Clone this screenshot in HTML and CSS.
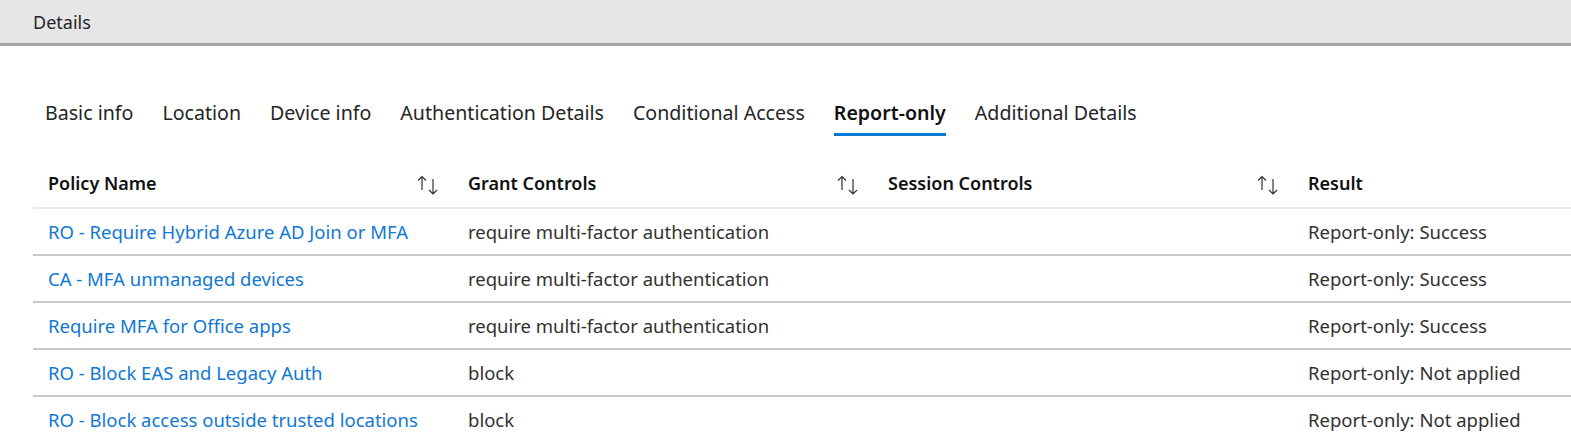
FILE: index.html
```html
<!DOCTYPE html>
<html lang="en">
<head>
<meta charset="utf-8">
<title>Details</title>
<link rel="stylesheet" href="styles.css">
</head>
<body>
<div class="titlebar"><span class="title">Details</span></div>
<nav class="tabs">
  <span class="tab">Basic info</span>
  <span class="tab">Location</span>
  <span class="tab">Device info</span>
  <span class="tab">Authentication Details</span>
  <span class="tab">Conditional Access</span>
  <span class="tab active">Report-only</span>
  <span class="tab">Additional Details</span>
</nav>
<div class="table">
  <div class="row head">
    <div class="cell"><span>Policy Name</span><svg class="sort" width="24" height="20" viewBox="0 0 24 20"><path d="M5 1.5V15M1 5.5L5 1.5L9 5.5" fill="none" stroke="#323130" stroke-width="1.2"/><path d="M16 4V19M12 15L16 19L20 15" fill="none" stroke="#323130" stroke-width="1.2"/></svg></div>
    <div class="cell"><span>Grant Controls</span><svg class="sort" width="24" height="20" viewBox="0 0 24 20"><path d="M5 1.5V15M1 5.5L5 1.5L9 5.5" fill="none" stroke="#323130" stroke-width="1.2"/><path d="M16 4V19M12 15L16 19L20 15" fill="none" stroke="#323130" stroke-width="1.2"/></svg></div>
    <div class="cell"><span>Session Controls</span><svg class="sort" width="24" height="20" viewBox="0 0 24 20"><path d="M5 1.5V15M1 5.5L5 1.5L9 5.5" fill="none" stroke="#323130" stroke-width="1.2"/><path d="M16 4V19M12 15L16 19L20 15" fill="none" stroke="#323130" stroke-width="1.2"/></svg></div>
    <div class="cell"><span>Result</span></div>
  </div>
  <div class="row">
    <div class="cell"><a class="link">RO - Require Hybrid Azure AD Join or MFA</a></div>
    <div class="cell">require multi-factor authentication</div>
    <div class="cell"></div>
    <div class="cell">Report-only: Success</div>
  </div>
  <div class="row">
    <div class="cell"><a class="link">CA - MFA unmanaged devices</a></div>
    <div class="cell">require multi-factor authentication</div>
    <div class="cell"></div>
    <div class="cell">Report-only: Success</div>
  </div>
  <div class="row">
    <div class="cell"><a class="link">Require MFA for Office apps</a></div>
    <div class="cell">require multi-factor authentication</div>
    <div class="cell"></div>
    <div class="cell">Report-only: Success</div>
  </div>
  <div class="row">
    <div class="cell"><a class="link">RO - Block EAS and Legacy Auth</a></div>
    <div class="cell">block</div>
    <div class="cell"></div>
    <div class="cell">Report-only: Not applied</div>
  </div>
  <div class="row">
    <div class="cell"><a class="link">RO - Block access outside trusted locations</a></div>
    <div class="cell">block</div>
    <div class="cell"></div>
    <div class="cell">Report-only: Not applied</div>
  </div>
</div>
</body>
</html>
```
FILE: styles.css
```css
html, body {
  margin: 0;
  padding: 0;
  background: #ffffff;
  font-family: "Segoe UI", "Noto Sans", "Open Sans", sans-serif;
  color: #323130;
  overflow: hidden;
}
.titlebar {
  height: 43px;
  background: #e6e6e6;
  border-bottom: 3px solid #a6a6a6;
  display: flex;
  align-items: center;
  padding-left: 33px;
}
.title {
  font-size: 18px;
  color: #252525;
}
.tabs {
  display: flex;
  gap: 29px;
  margin-top: 46px;
  padding-left: 45px;
  height: 44px;
}
.tab {
  font-size: 19.6px;
  color: #252525;
  height: 41px;
  display: flex;
  align-items: center;
  border-bottom: 3px solid transparent;
  white-space: nowrap;
}
.tab.active {
  font-weight: 600;
  color: #111111;
  border-bottom-color: #0078d4;
}
.table {
  margin-top: 26px;
  margin-left: 33px;
}
.row {
  display: grid;
  grid-template-columns: 420px 420px 420px 1fr;
  height: 45px;
  border-bottom: 2px solid #c8c8c8;
}
.row.head {
  border-bottom-color: #ebebeb;
}
.cell {
  display: flex;
  align-items: center;
  justify-content: space-between;
  padding: 0 12px 0 15px;
  font-size: 18.5px;
  white-space: nowrap;
}
.head .cell {
  font-weight: 600;
  font-size: 18px;
  color: #111111;
}
.head .cell span {
  padding-bottom: 3px;
}
.sort {
  display: block;
}
.link {
  color: #0f78d4;
}
```
